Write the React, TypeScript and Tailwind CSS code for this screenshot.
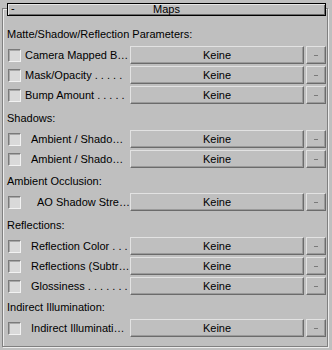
import React from "react";

type Row = { label: string; indent: number };
type Section = { title: string; mt: string; rows: Row[] };

const sections: Section[] = [
  {
    title: "Matte/Shadow/Reflection Parameters:",
    mt: "mt-0",
    rows: [
      { label: "Camera Mapped B…", indent: 0 },
      { label: "Mask/Opacity . . . . .", indent: 0 },
      { label: "Bump Amount . . . . .", indent: 0 },
    ],
  },
  {
    title: "Shadows:",
    mt: "mt-[7px]",
    rows: [
      { label: "Ambient / Shado…", indent: 1 },
      { label: "Ambient / Shado…", indent: 1 },
    ],
  },
  {
    title: "Ambient Occlusion:",
    mt: "mt-[6px]",
    rows: [{ label: "AO Shadow Stre…", indent: 2 }],
  },
  {
    title: "Reflections:",
    mt: "mt-[7px]",
    rows: [
      { label: "Reflection Color . . .", indent: 1 },
      { label: "Reflections (Subtr…", indent: 1 },
      { label: "Glossiness . . . . . . .", indent: 1 },
    ],
  },
  {
    title: "Indirect Illumination:",
    mt: "mt-[5px]",
    rows: [{ label: "Indirect Illuminati…", indent: 1 }],
  },
];

const indentCls = ["pl-[4px]", "pl-[10px]", "pl-[16px]"];

function ParamRow({ row }: { row: Row }) {
  return (
    <div className="flex h-[18px] items-center pl-[5px]">
      <div className="h-[13px] w-[13px] shrink-0 border border-b-[#f2f2f2] border-l-[#7a7a7a] border-r-[#f2f2f2] border-t-[#7a7a7a] bg-[#d9d9d9] shadow-[inset_1px_1px_0_#a8a8a8]" />
      <div
        className={`w-[109px] shrink-0 overflow-hidden whitespace-nowrap text-[11px] leading-[18px] ${indentCls[row.indent]}`}
      >
        {row.label}
      </div>
      <div className="flex h-[18px] w-[174px] shrink-0 items-center justify-center border border-b-[#6b6b6b] border-l-[#e2e2e2] border-r-[#6b6b6b] border-t-[#e2e2e2] text-[11px] shadow-[inset_-1px_-1px_0_#9a9a9a]">
        Keine
      </div>
      <div className="ml-[2px] flex h-[18px] w-[20px] shrink-0 items-center justify-center border border-b-[#6b6b6b] border-l-[#e2e2e2] border-r-[#6b6b6b] border-t-[#e2e2e2] shadow-[inset_-1px_-1px_0_#9a9a9a]">
        <div className="h-[1px] w-[4px] bg-[#7a7a7a]" />
      </div>
    </div>
  );
}

export default function App() {
  return (
    <div
      className="h-[350px] w-[332px] overflow-hidden bg-[#bfbfbf] pt-[3px] text-black"
      style={{ fontFamily: '"Liberation Sans", Arial, sans-serif' }}
    >
      <div className="relative z-10 ml-[7px] flex h-[13px] w-[319px] items-center border border-black bg-[#bfbfbf] shadow-[inset_1px_1px_0_#e6e6e6,inset_-1px_-1px_0_#6b6b6b]">
        <span className="absolute left-[3px] top-[-2px] text-[11px] leading-[13px]">-</span>
        <span className="w-full text-center text-[11px] leading-[11px]">Maps</span>
      </div>
      <div className="ml-[2px] mt-[-8px] h-[339px] w-[326px] border border-[#808080] pt-[18px] shadow-[inset_1px_1px_0_#ececec,1px_1px_0_#ececec]">
        {sections.map((s, i) => (
          <div key={i} className={s.mt}>
            <div className="mb-[5px] h-[14px] pl-[4px] text-[11px] leading-[14px] whitespace-nowrap">
              {s.title}
            </div>
            <div className="flex flex-col gap-[2px]">
              {s.rows.map((r, j) => (
                <ParamRow key={j} row={r} />
              ))}
            </div>
          </div>
        ))}
      </div>
    </div>
  );
}
